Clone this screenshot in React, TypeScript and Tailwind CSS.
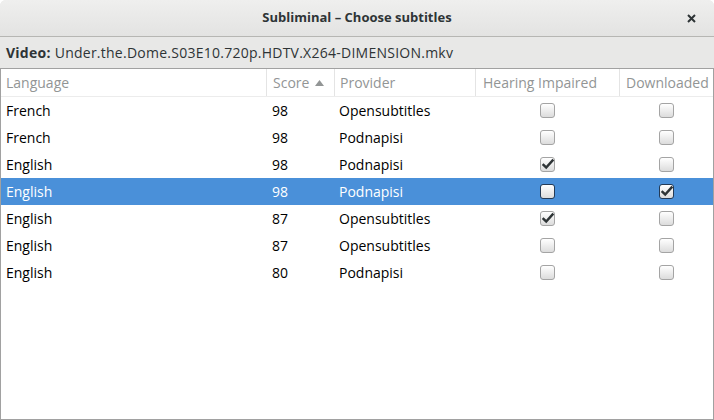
import React from "react";

type Row = {
  language: string;
  score: number;
  provider: string;
  hearing: boolean;
  downloaded: boolean;
  selected?: boolean;
};

const rows: Row[] = [
  { language: "French", score: 98, provider: "Opensubtitles", hearing: false, downloaded: false },
  { language: "French", score: 98, provider: "Podnapisi", hearing: false, downloaded: false },
  { language: "English", score: 98, provider: "Podnapisi", hearing: true, downloaded: false },
  { language: "English", score: 98, provider: "Podnapisi", hearing: false, downloaded: true, selected: true },
  { language: "English", score: 87, provider: "Opensubtitles", hearing: true, downloaded: false },
  { language: "English", score: 87, provider: "Opensubtitles", hearing: false, downloaded: false },
  { language: "English", score: 80, provider: "Podnapisi", hearing: false, downloaded: false },
];

function Check({ checked, selected }: { checked: boolean; selected?: boolean }) {
  return (
    <span
      className={`flex w-[15px] h-[15px] items-center justify-center rounded-[3px] border bg-gradient-to-b from-white to-[#dcdcdc] ${
        selected ? "border-[#243a55]" : "border-[#a4a4a4]"
      }`}
    >
      {checked && (
        <svg width="13" height="13" viewBox="0 0 13 13">
          <path d="M2.5 7 L5.2 9.5 L11.5 2.5" fill="none" stroke="#2e3436" strokeWidth="2.4" strokeLinecap="square" />
        </svg>
      )}
    </span>
  );
}

export default function App() {
  return (
    <div className="w-[714px] h-[420px] bg-[#e8e8e7] flex flex-col text-[14px] text-[#2e3436] overflow-hidden rounded-t-[6px]" style={{ fontFamily: '"Open Sans", "Noto Sans", sans-serif' }}>
      <div className="h-[37px] shrink-0 flex items-center justify-center relative bg-gradient-to-b from-[#efefee] to-[#e3e3e2] border-b border-[#b6b6b3]">
        <span className="font-bold text-[13px]">Subliminal – Choose subtitles</span>
        <svg className="absolute right-[18px] top-[14px]" width="9" height="9" viewBox="0 0 9 9">
          <path d="M1 1 L8 8 M8 1 L1 8" stroke="#2e3436" strokeWidth="2" />
        </svg>
      </div>
      <div className="h-[31px] shrink-0 flex items-center px-[6px] bg-[#e8e8e7] tracking-[0.25px]">
        <span className="font-bold mr-1">Video:</span>
        <span>Under.the.Dome.S03E10.720p.HDTV.X264-DIMENSION.mkv</span>
      </div>
      <div className="flex-1 bg-white border border-[#a1a1a1] flex flex-col">
        <div className="h-[28px] shrink-0 grid grid-cols-[265px_68px_141px_144px_1fr] text-[#929595] border-b border-[#ececec]">
          <div className="flex items-center pl-[5px]">Language</div>
          <div className="flex items-center pl-[6px] border-l border-[#e4e4e4] gap-[6px]">
            Score
            <svg width="9" height="6" viewBox="0 0 9 6">
              <path d="M0 6 L4.5 0 L9 6 Z" fill="#929595" />
            </svg>
          </div>
          <div className="flex items-center pl-[5px] border-l border-[#e4e4e4]">Provider</div>
          <div className="flex items-center pl-[7px] border-l border-[#e4e4e4]">Hearing Impaired</div>
          <div className="flex items-center pl-[6px] border-l border-[#e4e4e4]">Downloaded</div>
        </div>
        {rows.map((r, i) => (
          <div
            key={i}
            className={`h-[27px] shrink-0 grid grid-cols-[265px_68px_141px_144px_1fr] items-center ${
              r.selected ? "bg-[#4a90d9] text-white" : "text-black"
            }`}
          >
            <div className="pl-[5px]">{r.language}</div>
            <div className="pl-[6px]">{r.score}</div>
            <div className="pl-[5px]">{r.provider}</div>
            <div className="flex justify-center">
              <Check checked={r.hearing} selected={r.selected} />
            </div>
            <div className="flex justify-center">
              <Check checked={r.downloaded} selected={r.selected} />
            </div>
          </div>
        ))}
      </div>
    </div>
  );
}
